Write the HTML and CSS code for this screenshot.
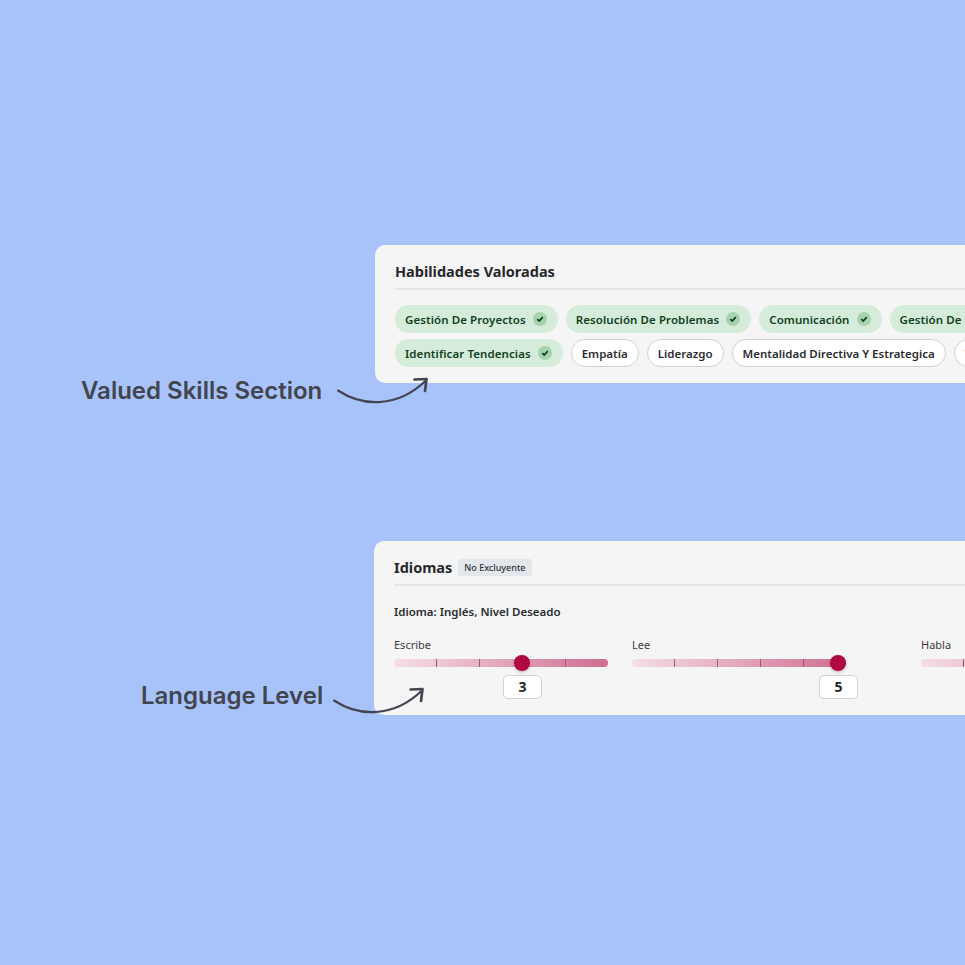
FILE: index.html
```html
<!DOCTYPE html>
<html lang="es">
<head>
<meta charset="utf-8">
<title>Habilidades e Idiomas</title>
<link rel="stylesheet" href="styles.css">
</head>
<body>
<main class="stage">
  <section class="row row-skills">
    <div class="callout callout-skills">
      <span class="callout-label">Valued Skills Section</span>
      <svg class="arrow arrow-skills" width="92" height="30" viewBox="0 0 92 30" fill="none" stroke="#42454d" stroke-linecap="round" stroke-linejoin="round"><path stroke-width="2.100" d="M1 12.500C14 21 29 25 43 24C60 23 76 15 89 2.500"/><path stroke-width="2.700" d="M77.500 1.500L89.500 1L88 13"/></svg>
    </div>
    <div class="card card-skills">
      <h2 class="card-title">Habilidades Valoradas</h2>
      <div class="chips">
        <div class="chip-line">
          <span class="chip chip-on">Gestión De Proyectos <svg class="check" width="14" height="14" viewBox="0 0 14 14"><circle cx="7" cy="7" r="7" fill="#a5d3ae"/><path d="M4.200 7.200L6.200 9.100L9.800 5.200" fill="none" stroke="#0e3e20" stroke-width="1.700"/></svg></span>
          <span class="chip chip-on">Resolución De Problemas <svg class="check" width="14" height="14" viewBox="0 0 14 14"><circle cx="7" cy="7" r="7" fill="#a5d3ae"/><path d="M4.200 7.200L6.200 9.100L9.800 5.200" fill="none" stroke="#0e3e20" stroke-width="1.700"/></svg></span>
          <span class="chip chip-on">Comunicación <svg class="check" width="14" height="14" viewBox="0 0 14 14"><circle cx="7" cy="7" r="7" fill="#a5d3ae"/><path d="M4.200 7.200L6.200 9.100L9.800 5.200" fill="none" stroke="#0e3e20" stroke-width="1.700"/></svg></span>
          <span class="chip chip-on">Gestión De Equipos</span>
        </div>
        <div class="chip-line">
          <span class="chip chip-on">Identificar Tendencias <svg class="check" width="14" height="14" viewBox="0 0 14 14"><circle cx="7" cy="7" r="7" fill="#a5d3ae"/><path d="M4.200 7.200L6.200 9.100L9.800 5.200" fill="none" stroke="#0e3e20" stroke-width="1.700"/></svg></span>
          <span class="chip chip-off">Empatía</span>
          <span class="chip chip-off">Liderazgo</span>
          <span class="chip chip-off">Mentalidad Directiva Y Estrategica</span>
          <span class="chip chip-off">Trabajo</span>
        </div>
      </div>
    </div>
  </section>

  <section class="row row-lang">
    <div class="callout callout-lang">
      <span class="callout-label">Language Level</span>
      <svg class="arrow arrow-lang" width="92" height="30" viewBox="0 0 92 30" fill="none" stroke="#42454d" stroke-linecap="round" stroke-linejoin="round"><path stroke-width="2.100" d="M1 12.500C14 21 29 25 43 24C60 23 76 15 89 2.500"/><path stroke-width="2.700" d="M77.500 1.500L89.500 1L88 13"/></svg>
    </div>
    <div class="card card-lang">
      <div class="card-title title-lang">
        <h2 class="title-text">Idiomas</h2>
        <span class="badge">No Excluyente</span>
      </div>
      <p class="lang-name">Idioma: Inglés, Nivel Deseado</p>
      <div class="sliders">
        <div class="slider">
          <span class="slider-label">Escribe</span>
          <div class="track"><i class="tick"></i><i class="tick"></i><i class="tick"></i><i class="tick"></i><b class="thumb thumb-3"></b></div>
          <div class="value value-3">3</div>
        </div>
        <div class="slider">
          <span class="slider-label">Lee</span>
          <div class="track"><i class="tick"></i><i class="tick"></i><i class="tick"></i><i class="tick"></i><b class="thumb thumb-5"></b></div>
          <div class="value value-5">5</div>
        </div>
        <div class="slider slider-last">
          <span class="slider-label">Habla</span>
          <div class="track"><i class="tick"></i><i class="tick"></i><i class="tick"></i><i class="tick"></i></div>
        </div>
      </div>
    </div>
  </section>
</main>
</body>
</html>
```
FILE: styles.css
```css
* { box-sizing: border-box; }
html, body { margin: 0; height: 100%; }
body {
  background: #a8c2fa;
  overflow: hidden;
  font-family: "Noto Sans", "Open Sans", sans-serif;
  color: #26282b;
}
.stage {
  width: 965px;
  height: 965px;
  padding-top: 245px;
  overflow: hidden;
}
.row { position: relative; width: 965px; }
.row-skills { height: 138px; padding-left: 375px; }
.row-lang { margin-top: 158px; height: 174px; padding-left: 374px; }

.card {
  background: #f5f5f6;
  border-radius: 10px 0 0 10px;
  height: 100%;
  padding: 16px 0 0 20px;
  overflow: hidden;
  white-space: nowrap;
}
.card-title {
  margin: 0;
  height: 29px;
  width: 2000px;
  border-bottom: 2px solid #e3e5e8;
  font-size: 14.500px;
  line-height: 20px;
  font-weight: 700;
  color: #26282b;
}
.chips { margin-top: 15px; display: flex; flex-direction: column; gap: 6px; }
.chip-line { display: flex; gap: 8px; }
.chip {
  height: 28px;
  border-radius: 14px;
  display: inline-flex;
  align-items: center;
  gap: 7px;
  padding: 0 10px;
  font-size: 11.500px;
  font-weight: 600;
  flex: none;
}
.chip-on { background: #d6ecdb; color: #0f3f20; padding-right: 11px; letter-spacing: 0.080px; }
.chip-off { background: #fff; border: 1px solid #cfd2d6; color: #2a2c30; }
.check { flex: none; }

.title-lang { display: flex; align-items: center; gap: 6px; padding-bottom: 7px; }
.title-text { margin: 0; font-size: 14.500px; line-height: 20px; font-weight: 700; }
.badge {
  background: #e3e6ea;
  border-radius: 3px;
  font-size: 9px;
  line-height: 17px;
  height: 17px;
  padding: 0 6px;
  font-weight: 500;
  color: #2f3236;
}
.lang-name { margin: 17px 0 0; font-size: 11.500px; line-height: 18px; font-weight: 600; color: #2a2c30; }
.sliders { display: flex; margin-top: 16px; }
.slider { width: 214px; margin-right: 24px; flex: none; }
.slider-last { margin-left: 51px; margin-right: 0; }
.slider-label { display: block; font-size: 11px; line-height: 16px; color: #3a3c40; }
.track {
  position: relative;
  margin-top: 6px;
  height: 8px;
  border-radius: 4px;
  background: linear-gradient(90deg, #f5dfe6, #cf6e8c);
  display: flex;
  padding-left: 42px;
  gap: 42px;
}
.tick { width: 1px; height: 8px; background: #a5566f; flex: none; }
.thumb {
  position: absolute;
  top: -4px;
  width: 16px;
  height: 16px;
  border-radius: 50%;
  background: #ae0a3f;
  box-shadow: 0 1px 3px rgba(90, 20, 40, .3);
}
.thumb-3 { left: 120px; }
.thumb-5 { left: 198px; }
.value {
  margin-top: 8px;
  width: 39px;
  height: 24px;
  border: 1px solid #cfd2d6;
  border-radius: 5px;
  background: #fff;
  text-align: center;
  font-size: 14px;
  line-height: 22px;
  font-weight: 700;
}
.value-3 { margin-left: 109px; }
.value-5 { margin-left: 187px; }

.callout { position: absolute; left: 0; top: 0; }
.callout-label {
  position: absolute;
  font-family: Inter, sans-serif;
  font-weight: 600;
  white-space: nowrap;
  color: #42454d;
  font-size: 24px;
  line-height: 28px;
}
.callout-skills .callout-label { left: 81px; top: 132px; }
.callout-lang .callout-label { left: 141px; top: 141px; }
.arrow { position: absolute; z-index: 2; overflow: visible; }
.arrow-skills { left: 337px; top: 133px; }
.arrow-lang { left: 333px; top: 147px; }
```
